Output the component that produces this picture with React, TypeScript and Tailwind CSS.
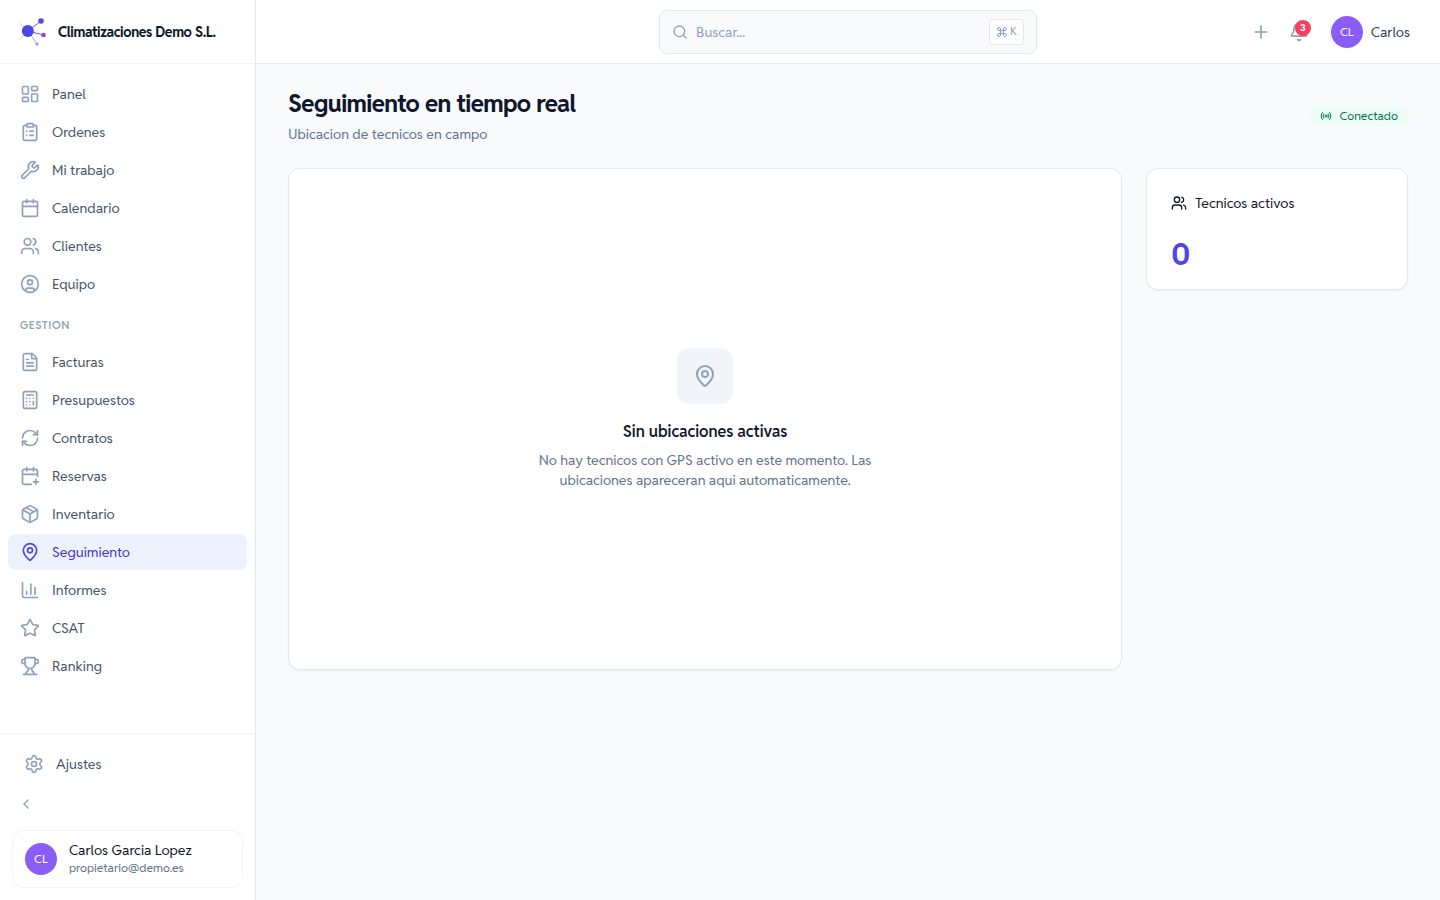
import React from 'react'
import {
  LayoutDashboard,
  ClipboardList,
  Wrench,
  Calendar,
  Users,
  CircleUser,
  FileText,
  Calculator,
  RefreshCw,
  CalendarPlus,
  Package,
  MapPin,
  ChartColumn,
  Star,
  Trophy,
  Settings,
  ChevronLeft,
  Search,
  Command,
  Plus,
  Bell,
  Radio,
  type LucideIcon,
} from 'lucide-react'

interface NavItem {
  label: string
  icon: LucideIcon
  active?: boolean
}

const mainItems: NavItem[] = [
  { label: 'Panel', icon: LayoutDashboard },
  { label: 'Ordenes', icon: ClipboardList },
  { label: 'Mi trabajo', icon: Wrench },
  { label: 'Calendario', icon: Calendar },
  { label: 'Clientes', icon: Users },
  { label: 'Equipo', icon: CircleUser },
]

const managementItems: NavItem[] = [
  { label: 'Facturas', icon: FileText },
  { label: 'Presupuestos', icon: Calculator },
  { label: 'Contratos', icon: RefreshCw },
  { label: 'Reservas', icon: CalendarPlus },
  { label: 'Inventario', icon: Package },
  { label: 'Seguimiento', icon: MapPin, active: true },
  { label: 'Informes', icon: ChartColumn },
  { label: 'CSAT', icon: Star },
  { label: 'Ranking', icon: Trophy },
]

const Logo: React.FC = () => (
  <svg viewBox="0 0 32 32" className="h-8 w-8 shrink-0" fill="none" aria-hidden="true">
    <path d="M2 7 Q4 10 6 12 M1 24 Q3 22 5 19" stroke="#c7d2fe" strokeWidth="0.8" />
    <path d="M10 15 23 5 M10 15 25.500 19" stroke="#6d55e8" strokeWidth="1" />
    <path d="M10 15 19 28" stroke="#a78bfa" strokeWidth="0.8" />
    <circle cx="9.800" cy="15" r="6" fill="#4f46e5" />
    <circle cx="23" cy="5" r="2.800" fill="#5b45dc" />
    <circle cx="25.500" cy="19" r="2.300" fill="#7c4ddb" />
    <circle cx="19" cy="28" r="1.600" fill="#a78bfa" />
  </svg>
)

const NavLink: React.FC<{ item: NavItem }> = ({ item }) => {
  const Icon = item.icon
  return (
    <a
      href="#"
      aria-current={item.active ? 'page' : undefined}
      className={
        item.active
          ? 'flex h-9 items-center gap-3 rounded-lg bg-[#eef2ff] px-3 text-sm text-[#4338ca]'
          : 'flex h-9 items-center gap-3 rounded-lg px-3 text-sm text-slate-600 hover:bg-slate-50'
      }
    >
      <Icon className={item.active ? 'h-5 w-5 text-[#4f46e5]' : 'h-5 w-5 text-slate-400'} />
      {item.label}
    </a>
  )
}

const Avatar: React.FC = () => (
  <span className="flex h-8 w-8 shrink-0 items-center justify-center rounded-full bg-[#8b5cf6] text-xs text-white">
    CL
  </span>
)

const Sidebar: React.FC = () => (
  <aside className="flex w-64 shrink-0 flex-col border-r border-slate-200 bg-white">
    <div className="flex h-16 items-center gap-2 border-b border-slate-100 px-[18px]">
      <Logo />
      <span className="text-sm font-bold tracking-tight text-slate-900">Climatizaciones Demo S.L.</span>
    </div>

    <nav className="flex-1 px-2 py-3">
      <div className="space-y-0.5">
        {mainItems.map((item) => (
          <NavLink key={item.label} item={item} />
        ))}
      </div>
      <h2 className="px-3 pt-[15px] pb-[11px] text-[11px] leading-4 font-semibold tracking-wider text-slate-400 uppercase">
        Gestion
      </h2>
      <div className="space-y-0.5">
        {managementItems.map((item) => (
          <NavLink key={item.label} item={item} />
        ))}
      </div>
    </nav>

    <div className="border-t border-slate-100 p-3">
      <NavLink item={{ label: 'Ajustes', icon: Settings }} />
      <button aria-label="Contraer menu" className="mt-2 block rounded-md p-1.5 text-slate-400 hover:bg-slate-50">
        <ChevronLeft className="h-4 w-4" />
      </button>
      <div className="mt-3 flex items-center gap-3 rounded-xl border border-slate-100 px-3 py-2.5">
        <Avatar />
        <div>
          <p className="text-sm leading-[18px] text-slate-900">Carlos Garcia Lopez</p>
          <p className="text-xs leading-[18px] text-slate-500">propietario@demo.es</p>
        </div>
      </div>
    </div>
  </aside>
)

const Topbar: React.FC = () => (
  <header className="grid h-16 grid-cols-[1fr_378px_1fr] items-center border-b border-slate-200 bg-white">
    <label className="col-start-2 flex h-11 items-center gap-2 rounded-lg border border-slate-200 bg-slate-50 px-3">
      <Search className="h-4 w-4 shrink-0 text-slate-400" />
      <input
        type="text"
        aria-label="Buscar"
        placeholder="Buscar..."
        className="min-w-0 flex-1 bg-transparent text-sm text-slate-900 outline-none placeholder:text-slate-400"
      />
      <kbd className="flex h-[26px] items-center gap-0.5 rounded border border-slate-200 bg-white px-1.5 font-[inherit] text-[11px] text-slate-400">
        <Command className="h-3 w-3" />K
      </kbd>
    </label>
    <div className="flex items-center justify-end pr-[30px]">
      <button aria-label="Nuevo" className="p-2 text-slate-400">
        <Plus className="h-5 w-5" />
      </button>
      <button aria-label="Notificaciones" className="relative ml-0.5 p-2 text-slate-400">
        <Bell className="h-5 w-5" />
        <span className="absolute top-1.5 right-1.5 flex h-4 w-4 items-center justify-center rounded-full bg-[#f43f5e] text-[10px] leading-none font-bold text-white">
          3
        </span>
      </button>
      <button className="ml-3.5 flex items-center gap-2 text-sm text-slate-700">
        <Avatar />
        Carlos
      </button>
    </div>
  </header>
)

const App: React.FC = () => {
  return (
    <div className="flex min-h-screen bg-slate-50 font-['Reddit_Sans',Lato,sans-serif]">
      <Sidebar />
      <div className="flex min-w-0 flex-1 flex-col">
        <Topbar />
        <main className="px-8 py-6">
          <div className="flex items-center justify-between">
            <div>
              <h1 className="text-2xl font-bold tracking-tight text-slate-900">Seguimiento en tiempo real</h1>
              <p className="mt-1 text-sm text-slate-500">Ubicacion de tecnicos en campo</p>
            </div>
            <span className="flex items-center gap-2 rounded-full bg-[#ecfdf5] px-2.5 text-xs leading-5 text-[#047857]">
              <Radio className="h-3 w-3" />
              Conectado
            </span>
          </div>

          <div className="mt-6 grid grid-cols-4 items-start gap-6">
            <section className="col-span-3 flex min-h-[502px] flex-col items-center justify-center rounded-xl border border-slate-200 bg-white text-center shadow-xs">
              <div className="flex h-14 w-14 items-center justify-center rounded-xl bg-slate-100">
                <MapPin className="h-6 w-6 text-slate-400" />
              </div>
              <h2 className="mt-4 text-base font-semibold text-slate-900">Sin ubicaciones activas</h2>
              <p className="mt-1.5 max-w-sm text-sm text-slate-500">
                No hay tecnicos con GPS activo en este momento. Las ubicaciones apareceran aqui automaticamente.
              </p>
            </section>

            <section className="rounded-xl border border-slate-200 bg-white px-6 pt-6 pb-4 shadow-xs">
              <h2 className="flex items-center gap-2 text-sm text-slate-900">
                <Users className="h-4 w-4" />
                Tecnicos activos
              </h2>
              <p className="mt-6 text-3xl font-bold text-[#4f46e5]">0</p>
            </section>
          </div>
        </main>
      </div>
    </div>
  )
}

export default App
